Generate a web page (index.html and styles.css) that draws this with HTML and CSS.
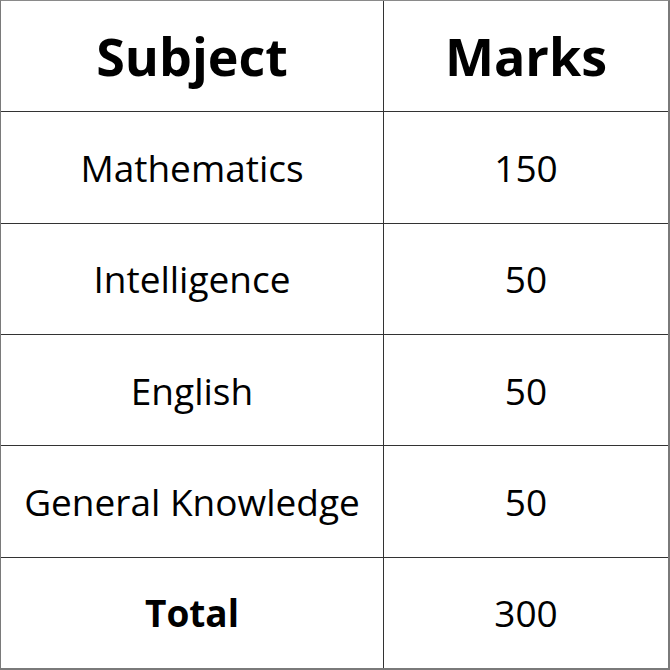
FILE: index.html
```html
<!DOCTYPE html>
<html>
<head>
<meta charset="utf-8">
<link rel="stylesheet" href="styles.css">
</head>
<body>
<div class="table">
  <div class="cell head">Subject</div>
  <div class="cell head">Marks</div>
  <div class="cell">Mathematics</div>
  <div class="cell">150</div>
  <div class="cell">Intelligence</div>
  <div class="cell">50</div>
  <div class="cell">English</div>
  <div class="cell">50</div>
  <div class="cell">General Knowledge</div>
  <div class="cell">50</div>
  <div class="cell strong">Total</div>
  <div class="cell">300</div>
</div>
</body>
</html>
```
FILE: styles.css
```css
html, body {
  margin: 0;
  padding: 0;
  background: #fff;
}
.table {
  box-sizing: border-box;
  width: 670px;
  height: 670px;
  border-left: 1px solid #7a7a7a;
  border-top: 1px solid #8a8a8a;
  border-right: 2px solid #7a7a7a;
  border-bottom: 2px solid #7a7a7a;
  background: #333;
  display: grid;
  grid-template-columns: 382px 1fr;
  grid-template-rows: repeat(6, 1fr);
  gap: 1px;
  font-family: "Open Sans", sans-serif;
  color: #000;
}
.cell {
  background: #fff;
  display: flex;
  align-items: center;
  justify-content: center;
  font-size: 37px;
  line-height: 1;
}
.head {
  font-size: 52px;
  font-weight: 700;
}
.strong {
  font-weight: 700;
}
```
